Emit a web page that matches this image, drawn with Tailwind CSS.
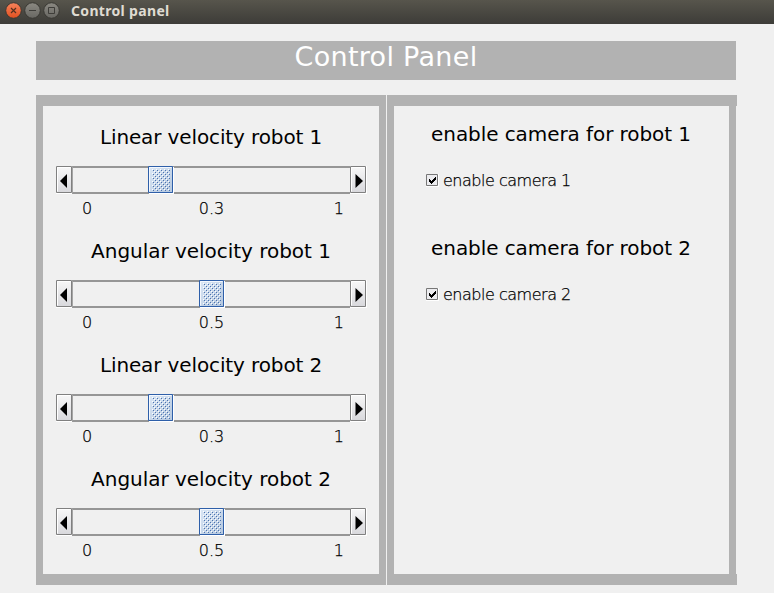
<!DOCTYPE html>
<html lang="en">
<head>
<meta charset="utf-8">
<title>Control panel</title>
<script src="https://cdn.jsdelivr.net/npm/@tailwindcss/browser@4"></script>
</head>
<body class="w-[774px] h-[593px] overflow-hidden bg-[#f0f0f0] text-black font-['DejaVu_Sans',sans-serif]">
<svg class="absolute w-0 h-0">
  <defs>
    <linearGradient id="orange" x2="0" y2="1"><stop stop-color="#f6835c"/><stop offset="1" stop-color="#e2501f"/></linearGradient>
    <linearGradient id="grey" x2="0" y2="1"><stop stop-color="#8b8982"/><stop offset="1" stop-color="#686762"/></linearGradient>
    <linearGradient id="btn" x2="0" y2="1"><stop stop-color="#f8f8f8"/><stop offset="1" stop-color="#d8d8dc"/></linearGradient>
    <linearGradient id="blue" x2="1" y2="1"><stop stop-color="#dce8f6"/><stop offset="1" stop-color="#b4c7de"/></linearGradient>
    <pattern id="dots" width="4" height="4" patternUnits="userSpaceOnUse" x="4" y="3"><path fill="#fff" d="M0 0h1v1H0zM2 2h1v1H2z"/><path fill="#4a72b0" d="M1 1h1v1H1zM3 3h1v1H3z"/></pattern>
    <symbol id="left" viewBox="0 0 16 28"><path fill="#fff" d="M0 0h16v28H0z"/><path fill="url(#btn)" stroke="#808080" d="M.5.5h15v26H.5z"/><path fill="none" stroke="#fff" d="M1.500 25.500v-24h13"/><path d="M4 15 11 8v14z"/></symbol>
    <symbol id="right" viewBox="0 0 17 28"><path fill="#fff" d="M0 0h17v28H0z"/><path fill="url(#btn)" stroke="#808080" d="M.5.5h15v26H.5z"/><path fill="none" stroke="#fff" d="M1.500 25.500v-24h13"/><path d="M13 15 5.500 8v14z"/></symbol>
    <symbol id="thumb" viewBox="0 0 26 28"><path fill="#fff" d="M25 1h1v27H1v-1h24z"/><path fill="url(#blue)" stroke="#2e5fa9" d="M.5.5h24v26H.5z"/><path fill="none" stroke="#f4f8fe" d="M1.500 25.500v-24h22"/><path fill="url(#dots)" shape-rendering="crispEdges" d="M4 3h18v22H4z"/></symbol>
    <symbol id="check" viewBox="0 0 13 13"><path fill="#fff" d="M0 0h13v13H0z"/><path fill="#ececef" stroke="#777" d="M.5.5h11v11H.5z"/><path d="M3 5h1v1h1v1h1V6h1V5h1V4h1V3h1v3H9v1H8v1H7v1H6v1H5V9H4V8H3z"/></symbol>
  </defs>
</svg>
<header class="flex h-6 bg-linear-to-b from-[#57554c] to-[#3d3c38]">
  <svg class="w-[71px] h-6 shrink-0" viewBox="0 0 71 24">
    <g stroke="#393833"><circle cx="13.500" cy="10.500" r="7.800" fill="url(#orange)"/><circle cx="32.500" cy="10.500" r="7.800" fill="url(#grey)"/><circle cx="51.500" cy="10.500" r="7.800" fill="url(#grey)"/></g>
    <path fill="none" stroke="#54301f" stroke-width="1.200" d="m11 8 5 5m0-5-5 5"/>
    <path fill="none" stroke="#3e3d39" d="M29 10.500h7M48.500 7.500h6v6h-6z"/>
  </svg>
  <h1 class="text-[14px] leading-[22px] font-bold tracking-[0.33px] text-[#dfdbd2] whitespace-nowrap font-['Noto_Sans',sans-serif]">Control panel</h1>
</header>
<main class="flex flex-col pl-9 pt-[17px]">
  <div class="w-[700px] h-[39px] bg-[#b2b2b2] text-white text-[27px] leading-[31px] tracking-[0.3px] text-center whitespace-nowrap">Control Panel</div>
  <div class="mt-[15px] flex gap-px">
    <section class="w-[350px] h-[490px] bg-[#b2b2b2] px-[7px] py-[11px]"><div id="slider-list" class="h-[468px] bg-[#f0f0f0]"></div></section>
    <section class="w-[350px] h-[490px]">
      <div class="h-[11px] bg-[#b2b2b2]"></div>
      <div id="cameras" class="w-[349px] h-[468px] border-x-[7px] border-[#b2b2b2]"></div>
      <div class="h-[11px] bg-[#b2b2b2]"></div>
    </section>
  </div>
</main>
<script>
const sliders = [['Linear velocity robot 1','0.3',76],['Angular velocity robot 1','0.5',127],['Linear velocity robot 2','0.3',76],['Angular velocity robot 2','0.5',127]];
document.getElementById('slider-list').innerHTML = sliders.map(([name, value, offset]) => `
<div class="h-[114px] pt-[18px]">
  <h2 class="h-[42px] text-[20px] leading-[26px] text-center whitespace-nowrap ${name[0] === 'L' ? 'tracking-[-0.12px]' : 'tracking-[-0.03px]'}">${name}</h2>
  <div class="ml-[13px] w-[311px] h-7 flex">
    <svg class="w-4 h-7 shrink-0"><use href="#left"/></svg>
    <div class="w-[278px] h-7 border-t-2 border-b-2 border-t-[#969696] border-b-[#969696] border-l border-l-[#a5a5a5]">
      <svg class="w-[26px] h-7 -mt-[2px]" style="margin-left:${offset - 1}px"><use href="#thumb"/></svg>
    </div>
    <svg class="w-[17px] h-7 shrink-0"><use href="#right"/></svg>
  </div>
  <div class="ml-[39px] w-[262px] grid grid-cols-3 text-[16px] leading-[30px] font-extralight [-webkit-text-stroke:0.25px_black]"><span>0</span><span class="text-center pr-[3px]">${value}</span><span class="text-right">1</span></div>
</div>`).join('');
document.getElementById('cameras').innerHTML = [1, 2].map(n => `
<div class="h-[114px] pt-[15px]">
  <h2 class="h-[47px] text-[20px] leading-[26px] tracking-[-0.08px] text-center whitespace-nowrap pr-px">enable camera for robot ${n}</h2>
  <label class="ml-8 flex h-6 items-center text-[16px] tracking-[-0.48px] font-extralight whitespace-nowrap [-webkit-text-stroke:0.25px_black]"><svg class="w-[13px] h-[13px] mr-1 shrink-0"><use href="#check"/></svg><span class="pt-0.5">enable camera ${n}</span></label>
</div>`).join('');
</script>
</body>
</html>
